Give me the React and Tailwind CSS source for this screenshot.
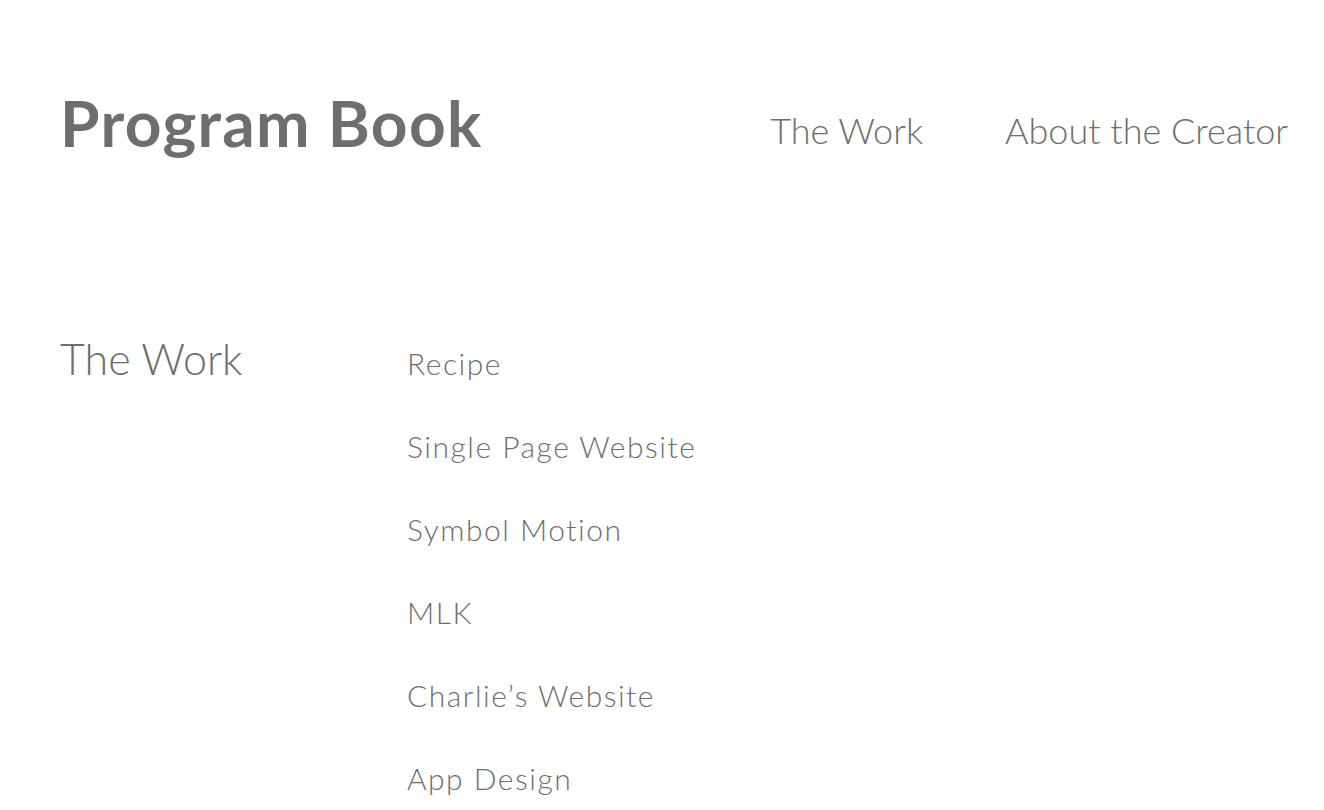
const works = ["Recipe", "Single Page Website", "Symbol Motion", "MLK", "Charlie’s Website", "App Design"]

function App() {
  return (
    <div className="min-h-screen bg-white text-[#6e6e6e] font-['Lato','Liberation_Sans',sans-serif]">
      <header className="flex items-start justify-between pl-[60px] pr-[36px] pt-[83px]">
        <h1 className="text-[64px] font-bold leading-[80px] tracking-[1.3px]">Program Book</h1>
        <nav className="flex gap-[82px] pt-[7px] text-[36px] font-light leading-[80px]">
          <a href="#">The Work</a>
          <a href="#">About the Creator</a>
        </nav>
      </header>

      <section className="flex pl-[60px] pt-[159px]">
        <h2 className="w-[347px] shrink-0 text-[43px] font-light leading-[60px]">The Work</h2>
        <ul className="flex flex-col gap-[33px] pt-[9px] text-[30px] font-light leading-[50px] tracking-[1.5px]">
          {works.map((w) => (
            <li key={w}>{w}</li>
          ))}
        </ul>
      </section>
    </div>
  )
}

export default App
